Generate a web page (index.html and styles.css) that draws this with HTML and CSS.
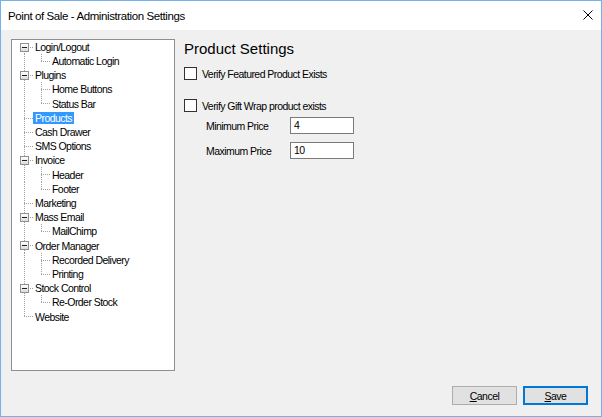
FILE: index.html
```html
<!DOCTYPE html>
<html>
<head>
<meta charset="utf-8">
<link rel="stylesheet" href="styles.css">
</head>
<body>
<div class="window">
  <div class="titlebar">
    <span class="title">Point of Sale - Administration Settings</span>
    <svg class="close" width="10" height="10" viewBox="0 0 10 10"><path d="M0.5 0.5L9.5 9.5M9.5 0.5L0.5 9.5" stroke="#000" stroke-width="1" fill="none"/></svg>
  </div>
  <div class="content">
    <div class="main">
      <div class="tree">
        <div class="node"><span class="g x first"><span class="exp"><span class="minus"></span></span></span><span class="label">Login/Logout</span></div>
        <div class="node"><span class="g v"></span><span class="g l"></span><span class="label">Automatic Login</span></div>
        <div class="node"><span class="g x"><span class="exp"><span class="minus"></span></span></span><span class="label">Plugins</span></div>
        <div class="node"><span class="g v"></span><span class="g t"></span><span class="label">Home Buttons</span></div>
        <div class="node"><span class="g v"></span><span class="g l"></span><span class="label">Status Bar</span></div>
        <div class="node"><span class="g t"></span><span class="label selected">Products</span></div>
        <div class="node"><span class="g t"></span><span class="label">Cash Drawer</span></div>
        <div class="node"><span class="g t"></span><span class="label">SMS Options</span></div>
        <div class="node"><span class="g x"><span class="exp"><span class="minus"></span></span></span><span class="label">Invoice</span></div>
        <div class="node"><span class="g v"></span><span class="g t"></span><span class="label">Header</span></div>
        <div class="node"><span class="g v"></span><span class="g l"></span><span class="label">Footer</span></div>
        <div class="node"><span class="g t"></span><span class="label">Marketing</span></div>
        <div class="node"><span class="g x"><span class="exp"><span class="minus"></span></span></span><span class="label">Mass Email</span></div>
        <div class="node"><span class="g v"></span><span class="g l"></span><span class="label">MailChimp</span></div>
        <div class="node"><span class="g x"><span class="exp"><span class="minus"></span></span></span><span class="label">Order Manager</span></div>
        <div class="node"><span class="g v"></span><span class="g t"></span><span class="label">Recorded Delivery</span></div>
        <div class="node"><span class="g v"></span><span class="g l"></span><span class="label">Printing</span></div>
        <div class="node"><span class="g x"><span class="exp"><span class="minus"></span></span></span><span class="label">Stock Control</span></div>
        <div class="node"><span class="g v"></span><span class="g l"></span><span class="label">Re-Order Stock</span></div>
        <div class="node"><span class="g l"></span><span class="label">Website</span></div>
      </div>
      <div class="panel">
        <h1 class="heading">Product Settings</h1>
        <label class="check first-check"><span class="cb"></span><span class="ctext">Verify Featured Product Exists</span></label>
        <label class="check second-check"><span class="cb"></span><span class="ctext">Verify Gift Wrap product exists</span></label>
        <div class="field first-field"><span class="flabel">Minimum Price</span><span class="tb">4</span></div>
        <div class="field second-field"><span class="flabel">Maximum Price</span><span class="tb">10</span></div>
      </div>
    </div>
    <div class="footer">
      <button class="btn"><u>C</u>ancel</button>
      <button class="btn default"><u>S</u>ave</button>
    </div>
  </div>
</div>
</body>
</html>
```
FILE: styles.css
```css
html, body {
  margin: 0;
  padding: 0;
  background: #f0f0f0;
}

.window {
  width: 602px;
  height: 417px;
  box-sizing: border-box;
  border: 1px solid #74b2ee;
  display: flex;
  flex-direction: column;
  background: #f0f0f0;
  font-family: "Liberation Sans", Arial, sans-serif;
  color: #000;
}

.titlebar {
  height: 29px;
  flex: none;
  background: #fff;
  display: flex;
  align-items: center;
  justify-content: space-between;
  padding: 0 8px 0 7px;
}

.title {
  font-size: 11.5px;
  letter-spacing: -0.4px;
}

.close {
  display: block;
  margin-top: -2px;
}

.content {
  flex: 1;
  display: flex;
  flex-direction: column;
  padding: 9px 13px 11px 10px;
}

.main {
  display: flex;
  gap: 9px;
  height: 332px;
  flex: none;
}

.tree {
  width: 164px;
  box-sizing: border-box;
  border: 1px solid #8e8f94;
  background: #fff;
  padding-left: 4px;
  font-size: 10.5px;
  letter-spacing: -0.55px;
}

.node {
  display: flex;
  height: 14px;
}

.node:nth-child(5n) {
  height: 15px;
}

.g {
  flex: none;
  width: 17px;
  align-self: stretch;
  background-repeat: no-repeat;
  display: flex;
  align-items: flex-start;
}

.v {
  background-image: repeating-linear-gradient(to bottom, #a0a0a0 0 1px, transparent 1px 2px);
  background-size: 1px 100%;
  background-position: 8px 0;
}

.t, .x {
  background-image: repeating-linear-gradient(to bottom, #a0a0a0 0 1px, transparent 1px 2px),
                    repeating-linear-gradient(to right, #a0a0a0 0 1px, transparent 1px 2px);
  background-size: 1px 100%, 9px 1px;
  background-position: 8px 0, 8px 7px;
}

.x.first {
  background-position: 8px 7px, 8px 7px;
}

.l {
  background-image: repeating-linear-gradient(to bottom, #a0a0a0 0 1px, transparent 1px 2px),
                    repeating-linear-gradient(to right, #a0a0a0 0 1px, transparent 1px 2px);
  background-size: 1px 8px, 9px 1px;
  background-position: 8px 0, 8px 7px;
}

.exp {
  width: 9px;
  height: 9px;
  box-sizing: border-box;
  margin: 3px 0 0 4px;
  border: 1px solid #919191;
  background: linear-gradient(#ffffff, #dcdcdc);
  display: flex;
  align-items: center;
  justify-content: center;
}

.minus {
  width: 5px;
  height: 1px;
  background: #1e1e1e;
}

.label {
  align-self: center;
  line-height: 12px;
  height: 12px;
  padding: 0 2px;
  white-space: nowrap;
}

.selected {
  background: #3399ff;
  color: #fff;
}

.panel {
  flex: 1;
  font-size: 10.5px;
  letter-spacing: -0.55px;
}

.heading {
  margin: 1px 0 0 0;
  font-size: 15px;
  line-height: 18px;
  font-weight: normal;
  letter-spacing: 0;
  color: #000;
}

.check {
  display: flex;
  align-items: center;
  height: 13px;
  gap: 5px;
}

.first-check {
  margin-top: 9px;
}

.second-check {
  margin-top: 19px;
}

.cb {
  width: 13px;
  height: 13px;
  box-sizing: border-box;
  border: 1px solid #333;
  background: #fff;
  flex: none;
}

.field {
  display: flex;
  align-items: center;
  padding-left: 22px;
}

.first-field {
  margin-top: 5px;
}

.second-field {
  margin-top: 8px;
}

.flabel {
  width: 84px;
  flex: none;
  padding-top: 1px;
}

.tb {
  width: 64px;
  height: 17px;
  box-sizing: border-box;
  border: 1px solid #7a7a7a;
  background: #fff;
  padding-left: 3px;
  line-height: 15px;
}

.footer {
  margin-top: 15px;
  display: flex;
  justify-content: flex-end;
  gap: 6px;
}

.btn {
  width: 65px;
  height: 19px;
  box-sizing: border-box;
  border: 1px solid #adadad;
  background: #e1e1e1;
  font-family: "Liberation Sans", Arial, sans-serif;
  font-size: 10.5px;
  letter-spacing: -0.5px;
  color: #000;
  padding: 0;
  margin: 0;
}

.btn.default {
  border: 1px solid #0078d7;
  box-shadow: inset 0 0 0 1px #0078d7;
}
```
